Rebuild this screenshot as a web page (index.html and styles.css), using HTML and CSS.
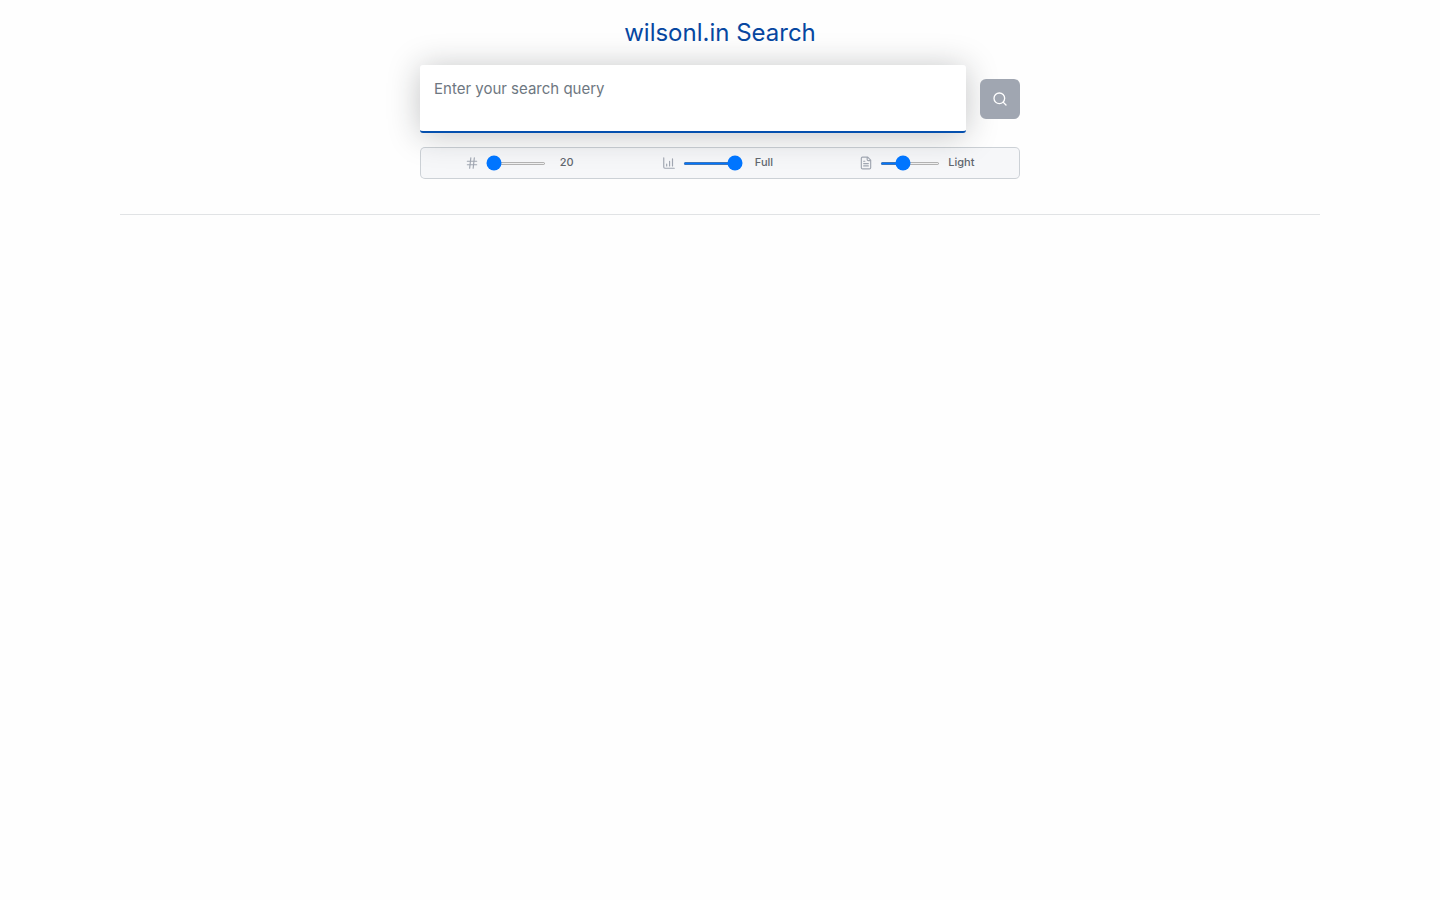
FILE: index.html
```
<!DOCTYPE html>
<html lang="en">
<head>
    <meta charset="UTF-8">
    <meta name="viewport" content="width=device-width, initial-scale=1.0">
    <title>wilsonl.in Search</title>
    <link rel="stylesheet" href="styles.css">
</head>
<body>
    <div class="container">
        <h1>wilsonl.in Search</h1>

        <form id="searchForm">
            <div class="search-row">
                <textarea id="query" name="query" aria-label="Search query" placeholder="Enter your search query"></textarea>
                <button type="submit" aria-label="Search" disabled>
                    <svg viewBox="0 0 24 24"><circle cx="11" cy="11" r="8"/><path d="m21 21-4.3-4.3"/></svg>
                </button>
            </div>

            <div class="options">
                <div class="option">
                    <label for="limit" aria-label="Results">
                        <svg viewBox="0 0 24 24"><path d="M4 9h16M4 15h16M10 3 8 21M16 3l-2 18"/></svg>
                    </label>
                    <input type="range" id="limit" min="20" max="100" value="20">
                    <output for="limit">20</output>
                </div>
                <div class="option">
                    <label for="quality" aria-label="Quality">
                        <svg viewBox="0 0 24 24"><path d="M3 3v16a2 2 0 0 0 2 2h16M8 17v-3M13 17V9M18 17V5"/></svg>
                    </label>
                    <input type="range" id="quality" min="0" max="3" value="3">
                    <output for="quality">Full</output>
                </div>
                <div class="option">
                    <label for="detail" aria-label="Detail">
                        <svg viewBox="0 0 24 24"><path d="M15 2H6a2 2 0 0 0-2 2v16a2 2 0 0 0 2 2h12a2 2 0 0 0 2-2V7zM14 2v4a2 2 0 0 0 2 2h4M10 9H8M16 13H8M16 17H8"/></svg>
                    </label>
                    <input type="range" id="detail" min="0" max="3" value="1">
                    <output for="detail">Light</output>
                </div>
            </div>
        </form>

        <hr>
    </div>
</body>
</html>
```

FILE: styles.css
```
* {
    box-sizing: border-box;
}
body {
    font-family: Inter, sans-serif;
    margin: 0;
    background-color: #fefefe;
    color: #60666e;
}
.container {
    max-width: 1200px;
    margin: 0 auto;
    padding-top: 14px;
}
h1 {
    margin: 0 0 14px;
    font-size: 24px;
    line-height: 37px;
    font-weight: 400;
    text-align: center;
    color: #0747a1;
}
form {
    max-width: 600px;
    margin: 0 auto;
}
svg {
    display: block;
    width: 14px;
    height: 14px;
    fill: none;
    stroke: currentColor;
    stroke-width: 2;
    stroke-linecap: round;
    stroke-linejoin: round;
}
.search-row {
    display: flex;
    align-items: center;
    gap: 14px;
    margin-bottom: 14px;
}
textarea {
    display: block;
    flex: 1;
    height: 68px;
    padding: 12px 14px;
    border: none;
    border-bottom: 2px solid #0550ae;
    border-radius: 3px;
    outline: none;
    resize: none;
    background-color: #fff;
    box-shadow: 0 2px 32px rgba(27, 31, 36, 0.26);
    font-family: Inter, sans-serif;
    font-size: 15px;
    line-height: 24px;
}
textarea::placeholder {
    color: #6e7781;
}
button {
    display: flex;
    align-items: center;
    justify-content: center;
    width: 40px;
    height: 40px;
    padding: 0;
    border: none;
    border-radius: 6px;
    background-color: #a0a6b1;
    color: #fff;
}
button svg {
    width: 16px;
    height: 16px;
}
.options {
    display: grid;
    grid-template-columns: repeat(3, 1fr);
    height: 32px;
    padding: 0 3px;
    border: 1px solid rgba(140, 149, 159, 0.4);
    border-radius: 5px;
    background-color: rgba(234, 238, 242, 0.4);
}
.option {
    display: flex;
    align-items: center;
    justify-content: center;
    gap: 7px;
}
.option label {
    color: #a0a6b1;
}
.option input {
    width: 60px;
    height: 3px;
    margin: 0;
}
.option output {
    width: 28px;
    padding-bottom: 2px;
    font-size: 11px;
    line-height: 16px;
    font-weight: 500;
    text-align: center;
    white-space: nowrap;
}
hr {
    margin: 35px 0 0;
    border: none;
    border-top: 1px solid #e1e3e5;
}
```
